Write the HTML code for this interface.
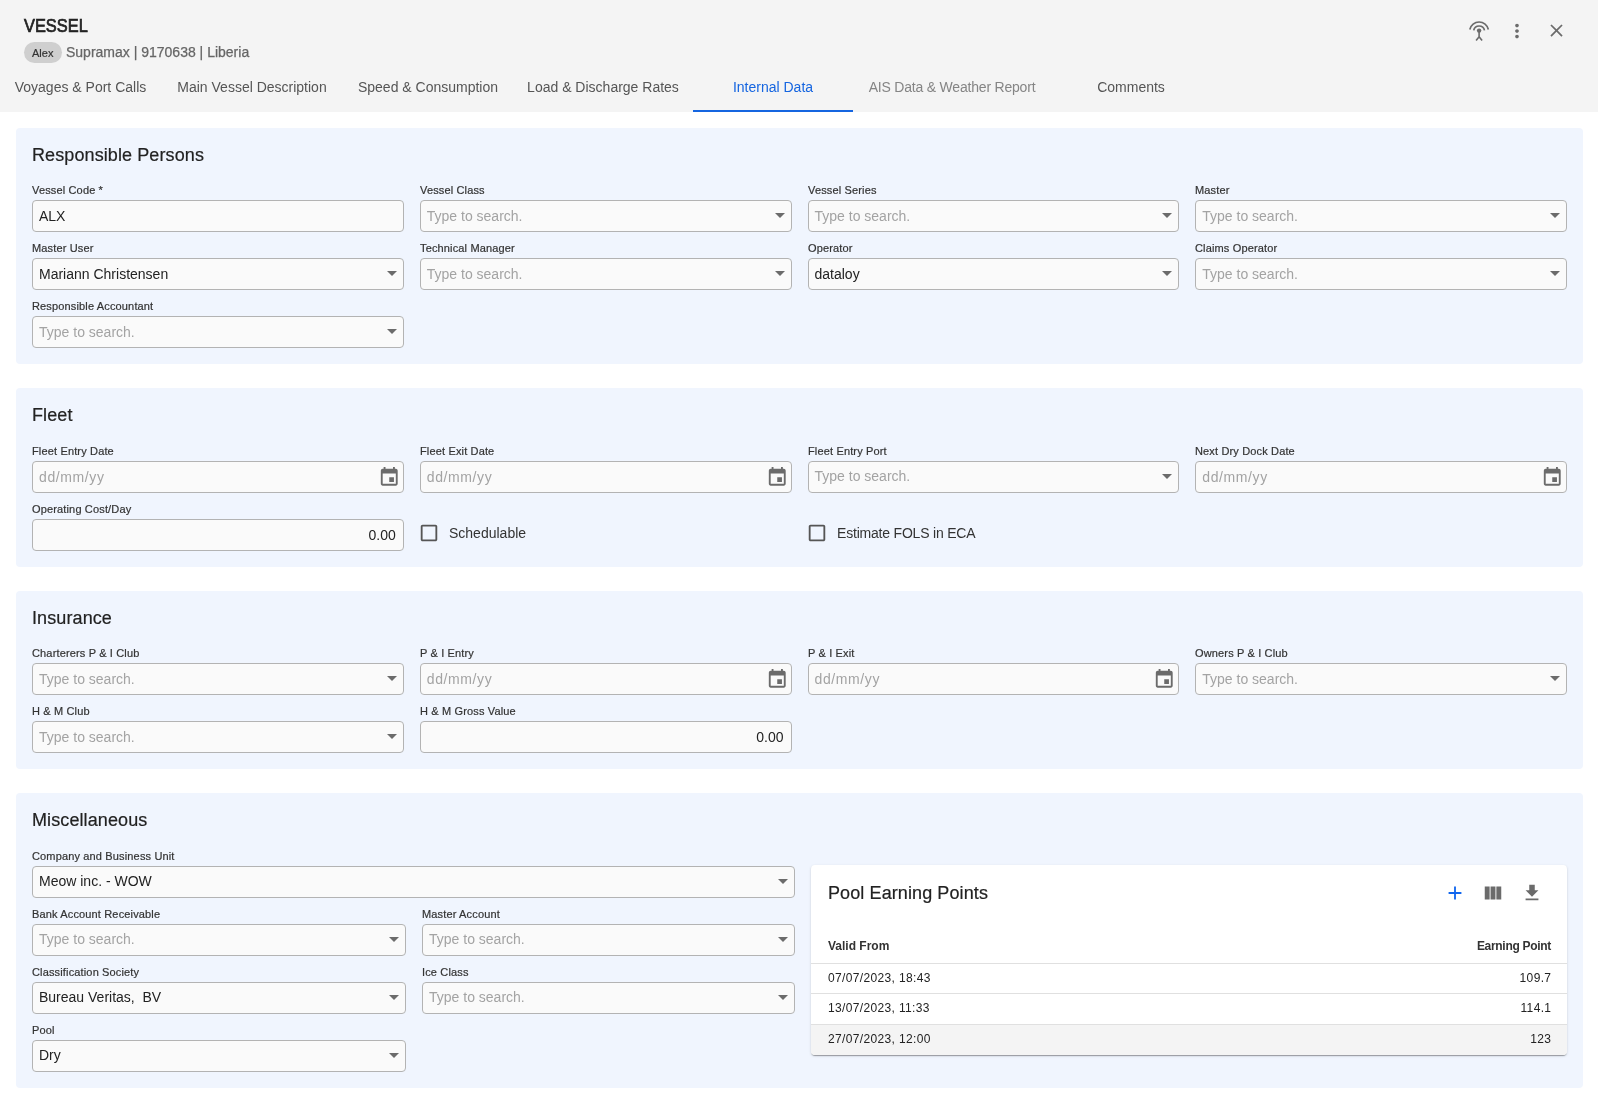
<!DOCTYPE html>
<html><head><meta charset="utf-8">
<style>
*{box-sizing:border-box;margin:0;padding:0}
html,body{width:1598px;height:1115px;overflow:hidden;background:#fff}
body{position:relative;font-family:"Liberation Sans",sans-serif;color:#222}
.a{position:absolute;white-space:nowrap;line-height:1}
#hdr{position:absolute;left:0;top:0;width:1598px;height:112px;background:#f4f4f4}
.tab{position:absolute;top:80px;font-size:14px;color:#555;text-align:center}
.sec{position:absolute;left:16px;width:1567px;background:#f0f5fe;border-radius:4px}
.st{position:absolute;left:16px;font-size:18px;color:#222;-webkit-text-stroke:0.2px #222;letter-spacing:0.1px}
.lbl{position:absolute;font-size:11px;color:#333;-webkit-text-stroke:0.2px #333;letter-spacing:0.15px}
.box{position:absolute;height:32px;border:1px solid #b3b3b3;border-radius:4px;background:#fafafa}
.box .v{position:absolute;left:6px;top:8px;font-size:14px;line-height:1;color:#222;white-space:nowrap}
.box .p{position:absolute;left:6px;top:8px;font-size:14px;line-height:1;color:#a3a3a3;white-space:nowrap}
.box .r{position:absolute;right:7px;top:8px;font-size:14px;line-height:1;color:#222}
.dd{position:absolute;right:6px;top:12px;width:0;height:0;border-left:5px solid transparent;border-right:5px solid transparent;border-top:5px solid #6b6b6b}
.cal{position:absolute;right:2.5px;top:4px;width:22.5px;height:22.5px}
</style></head><body><div id="root" style="will-change:transform;position:absolute;left:0;top:0;width:1598px;height:1115px">
<div id="hdr">
  <div class="a" style="left:24px;top:17px;font-size:18px;color:#222;-webkit-text-stroke:0.7px #222;transform:scaleX(0.91);transform-origin:0 0">VESSEL</div>
  <div class="a" style="left:24px;top:42px;width:38px;height:21px;border-radius:11px;background:#cfcfcf"></div>
  <div class="a" style="left:32px;top:48px;font-size:11px;color:#333;-webkit-text-stroke:0.2px #333">Alex</div>
  <div class="a" style="left:66px;top:45px;font-size:14px;color:#666;-webkit-text-stroke:0.25px #666">Supramax | 9170638 | Liberia</div>
  <div class="tab a" style="left:0;width:161px;top:80px">Voyages &amp; Port Calls</div>
  <div class="tab a" style="left:161px;width:182px;top:80px">Main Vessel Description</div>
  <div class="tab a" style="left:343px;width:170px;top:80px">Speed &amp; Consumption</div>
  <div class="tab a" style="left:513px;width:180px;top:80px">Load &amp; Discharge Rates</div>
  <div class="tab a" style="left:693px;width:160px;top:80px;color:#1565e0">Internal Data</div>
  <div class="tab a" style="left:853px;width:198px;top:80px;color:#858585;letter-spacing:-0.2px">AIS Data &amp; Weather Report</div>
  <div class="tab a" style="left:1051px;width:160px;top:80px">Comments</div>
  <div class="a" style="left:693px;top:110px;width:160px;height:2px;background:#1565e0"></div>
</div>
<!-- SECTIONS -->
<div class="sec" style="top:128px;height:236px"></div>
<div class="a st" style="left:32px;top:145.76px">Responsible Persons</div>
<div class="a lbl" style="left:32px;top:184.69px">Vessel Code *</div>
<div class="box" style="left:32px;top:200px;width:371.75px"><span class="v" style="top:8px">ALX</span></div>
<div class="a lbl" style="left:420px;top:184.69px">Vessel Class</div>
<div class="box" style="left:419.75px;top:200px;width:371.75px"><span class="p" style="top:8px">Type to search.</span><span class="dd"></span></div>
<div class="a lbl" style="left:808px;top:184.69px">Vessel Series</div>
<div class="box" style="left:807.5px;top:200px;width:371.75px"><span class="p" style="top:8px">Type to search.</span><span class="dd"></span></div>
<div class="a lbl" style="left:1195px;top:184.69px">Master</div>
<div class="box" style="left:1195.25px;top:200px;width:371.75px"><span class="p" style="top:8px">Type to search.</span><span class="dd"></span></div>
<div class="a lbl" style="left:32px;top:242.69px">Master User</div>
<div class="box" style="left:32px;top:258px;width:371.75px"><span class="v" style="top:8px">Mariann Christensen</span><span class="dd"></span></div>
<div class="a lbl" style="left:420px;top:242.69px">Technical Manager</div>
<div class="box" style="left:419.75px;top:258px;width:371.75px"><span class="p" style="top:8px">Type to search.</span><span class="dd"></span></div>
<div class="a lbl" style="left:808px;top:242.69px">Operator</div>
<div class="box" style="left:807.5px;top:258px;width:371.75px"><span class="v" style="top:8px">dataloy</span><span class="dd"></span></div>
<div class="a lbl" style="left:1195px;top:242.69px">Claims Operator</div>
<div class="box" style="left:1195.25px;top:258px;width:371.75px"><span class="p" style="top:8px">Type to search.</span><span class="dd"></span></div>
<div class="a lbl" style="left:32px;top:300.69px">Responsible Accountant</div>
<div class="box" style="left:32px;top:316px;width:371.75px"><span class="p" style="top:8px">Type to search.</span><span class="dd"></span></div>
<div class="sec" style="top:388px;height:179px"></div>
<div class="a st" style="left:32px;top:405.76px">Fleet</div>
<div class="a lbl" style="left:32px;top:445.69px">Fleet Entry Date</div>
<div class="box" style="left:32px;top:461px;width:371.75px"><span class="p" style="top:8px;letter-spacing:0.6px">dd/mm/yy</span><svg class="cal" viewBox="0 0 24 24"><path fill="#6b6b6b" d="M17 12h-5v5h5v-5zM16 1v2H8V1H6v2H5c-1.11 0-1.99.9-1.99 2L3 19c0 1.1.89 2 2 2h14c1.1 0 2-.9 2-2V5c0-1.1-.9-2-2-2h-1V1h-2zm3 18H5V8h14v11z"/></svg></div>
<div class="a lbl" style="left:420px;top:445.69px">Fleet Exit Date</div>
<div class="box" style="left:419.75px;top:461px;width:371.75px"><span class="p" style="top:8px;letter-spacing:0.6px">dd/mm/yy</span><svg class="cal" viewBox="0 0 24 24"><path fill="#6b6b6b" d="M17 12h-5v5h5v-5zM16 1v2H8V1H6v2H5c-1.11 0-1.99.9-1.99 2L3 19c0 1.1.89 2 2 2h14c1.1 0 2-.9 2-2V5c0-1.1-.9-2-2-2h-1V1h-2zm3 18H5V8h14v11z"/></svg></div>
<div class="a lbl" style="left:808px;top:445.69px">Fleet Entry Port</div>
<div class="box" style="left:807.5px;top:461px;width:371.75px"><span class="p" style="top:7px">Type to search.</span><span class="dd"></span></div>
<div class="a lbl" style="left:1195px;top:445.69px">Next Dry Dock Date</div>
<div class="box" style="left:1195.25px;top:461px;width:371.75px"><span class="p" style="top:8px;letter-spacing:0.6px">dd/mm/yy</span><svg class="cal" viewBox="0 0 24 24"><path fill="#6b6b6b" d="M17 12h-5v5h5v-5zM16 1v2H8V1H6v2H5c-1.11 0-1.99.9-1.99 2L3 19c0 1.1.89 2 2 2h14c1.1 0 2-.9 2-2V5c0-1.1-.9-2-2-2h-1V1h-2zm3 18H5V8h14v11z"/></svg></div>
<div class="a lbl" style="left:32px;top:503.69px">Operating Cost/Day</div>
<div class="box" style="left:32px;top:519px;width:371.75px"><span class="r">0.00</span></div>
<svg class="a" style="left:418px;top:522px;width:22px;height:22px" viewBox="0 0 24 24"><path fill="#555" d="M19 5v14H5V5h14m0-2H5c-1.1 0-2 .9-2 2v14c0 1.1.9 2 2 2h14c1.1 0 2-.9 2-2V5c0-1.1-.9-2-2-2z"/></svg>
<div class="a" style="left:449px;top:526.15px;font-size:14px;color:#333">Schedulable</div>
<svg class="a" style="left:806px;top:522px;width:22px;height:22px" viewBox="0 0 24 24"><path fill="#555" d="M19 5v14H5V5h14m0-2H5c-1.1 0-2 .9-2 2v14c0 1.1.9 2 2 2h14c1.1 0 2-.9 2-2V5c0-1.1-.9-2-2-2z"/></svg>
<div class="a" style="left:837px;top:526.15px;font-size:14px;color:#333;letter-spacing:-0.2px">Estimate FOLS in ECA</div>
<div class="sec" style="top:591px;height:178px"></div>
<div class="a st" style="left:32px;top:608.76px">Insurance</div>
<div class="a lbl" style="left:32px;top:647.69px">Charterers P &amp; I Club</div>
<div class="box" style="left:32px;top:663px;width:371.75px"><span class="p" style="top:8px">Type to search.</span><span class="dd"></span></div>
<div class="a lbl" style="left:420px;top:647.69px">P &amp; I Entry</div>
<div class="box" style="left:419.75px;top:663px;width:371.75px"><span class="p" style="top:8px;letter-spacing:0.6px">dd/mm/yy</span><svg class="cal" viewBox="0 0 24 24"><path fill="#6b6b6b" d="M17 12h-5v5h5v-5zM16 1v2H8V1H6v2H5c-1.11 0-1.99.9-1.99 2L3 19c0 1.1.89 2 2 2h14c1.1 0 2-.9 2-2V5c0-1.1-.9-2-2-2h-1V1h-2zm3 18H5V8h14v11z"/></svg></div>
<div class="a lbl" style="left:808px;top:647.69px">P &amp; I Exit</div>
<div class="box" style="left:807.5px;top:663px;width:371.75px"><span class="p" style="top:8px;letter-spacing:0.6px">dd/mm/yy</span><svg class="cal" viewBox="0 0 24 24"><path fill="#6b6b6b" d="M17 12h-5v5h5v-5zM16 1v2H8V1H6v2H5c-1.11 0-1.99.9-1.99 2L3 19c0 1.1.89 2 2 2h14c1.1 0 2-.9 2-2V5c0-1.1-.9-2-2-2h-1V1h-2zm3 18H5V8h14v11z"/></svg></div>
<div class="a lbl" style="left:1195px;top:647.69px">Owners P &amp; I Club</div>
<div class="box" style="left:1195.25px;top:663px;width:371.75px"><span class="p" style="top:8px">Type to search.</span><span class="dd"></span></div>
<div class="a lbl" style="left:32px;top:705.69px">H &amp; M Club</div>
<div class="box" style="left:32px;top:721px;width:371.75px"><span class="p" style="top:8px">Type to search.</span><span class="dd"></span></div>
<div class="a lbl" style="left:420px;top:705.69px">H &amp; M Gross Value</div>
<div class="box" style="left:419.75px;top:721px;width:371.75px"><span class="r">0.00</span></div>
<div class="sec" style="top:793px;height:295px"></div>
<div class="a st" style="left:32px;top:810.76px">Miscellaneous</div>
<div class="a lbl" style="left:32px;top:850.69px">Company and Business Unit</div>
<div class="box" style="left:32px;top:866px;width:763px"><span class="v" style="top:7px">Meow inc. - WOW</span><span class="dd"></span></div>
<div class="a lbl" style="left:32px;top:908.69px">Bank Account Receivable</div>
<div class="box" style="left:32px;top:924px;width:374px"><span class="p" style="top:7px">Type to search.</span><span class="dd"></span></div>
<div class="a lbl" style="left:422px;top:908.69px">Master Account</div>
<div class="box" style="left:422px;top:924px;width:373px"><span class="p" style="top:7px">Type to search.</span><span class="dd"></span></div>
<div class="a lbl" style="left:32px;top:966.69px">Classification Society</div>
<div class="box" style="left:32px;top:982px;width:374px"><span class="v" style="top:7px">Bureau Veritas,&nbsp; BV</span><span class="dd"></span></div>
<div class="a lbl" style="left:422px;top:966.69px">Ice Class</div>
<div class="box" style="left:422px;top:982px;width:373px"><span class="p" style="top:7px">Type to search.</span><span class="dd"></span></div>
<div class="a lbl" style="left:32px;top:1024.69px">Pool</div>
<div class="box" style="left:32px;top:1040px;width:374px"><span class="v" style="top:7px">Dry</span><span class="dd"></span></div>
<div class="a" style="left:811px;top:865px;width:756px;height:190px;background:#fff;border-radius:4px;box-shadow:0 2px 1px -1px rgba(0,0,0,.2),0 1px 1px 0 rgba(0,0,0,.14),0 1px 3px 0 rgba(0,0,0,.12);overflow:hidden">
</div>
<div class="a" style="left:828px;top:883.76px;font-size:18px;color:#222;-webkit-text-stroke:0.2px #222;letter-spacing:0.1px">Pool Earning Points</div>
<svg class="a" style="left:1444px;top:882px;width:22px;height:22px" viewBox="0 0 24 24"><path fill="#1166ee" d="M19 13h-6v6h-2v-6H5v-2h6V5h2v6h6v2z"/></svg>
<svg class="a" style="left:1482px;top:882px;width:22px;height:22px" viewBox="0 0 24 24"><path fill="#6b6b6b" d="M14.67 5v14H9.33V5h5.34zm1 14H21V5h-5.33v14zm-7.34 0V5H3v14h5.33z"/></svg>
<svg class="a" style="left:1521px;top:882px;width:22px;height:22px" viewBox="0 0 24 24"><path fill="#6b6b6b" d="M19 9h-4V3H9v6H5l7 7 7-7zM5 18v2h14v-2H5z"/></svg>
<div class="a" style="left:828px;top:939.84px;font-size:12px;font-weight:700;color:#333">Valid From</div>
<div class="a" style="right:47px;top:939.84px;font-size:12px;font-weight:700;color:#333;letter-spacing:-0.3px">Earning Point</div>
<div class="a" style="left:811px;top:963px;width:756px;height:1px;background:#e0e0e0"></div>
<div class="a" style="left:828px;top:971.84px;font-size:12px;color:#222;letter-spacing:0.35px">07/07/2023, 18:43</div>
<div class="a" style="right:46.65px;top:971.84px;font-size:12px;color:#222;letter-spacing:0.35px">109.7</div>
<div class="a" style="left:828px;top:1001.84px;font-size:12px;color:#222;letter-spacing:0.35px">13/07/2023, 11:33</div>
<div class="a" style="right:46.65px;top:1001.84px;font-size:12px;color:#222;letter-spacing:0.35px">114.1</div>
<div class="a" style="left:811px;top:1025px;width:756px;height:30px;background:#f4f4f4;border-radius:0 0 4px 4px"></div>
<div class="a" style="left:828px;top:1032.84px;font-size:12px;color:#222;letter-spacing:0.35px">27/07/2023, 12:00</div>
<div class="a" style="right:46.65px;top:1032.84px;font-size:12px;color:#222;letter-spacing:0.35px">123</div>
<div class="a" style="left:811px;top:993px;width:756px;height:1px;background:#e0e0e0"></div>
<div class="a" style="left:811px;top:1024px;width:756px;height:1px;background:#e0e0e0"></div>
<svg class="a" style="left:1467px;top:19px;width:24px;height:24px" viewBox="0 0 24 24" fill="none" stroke="#6b6b6b" stroke-width="1.7">
<path d="M2.81 10.52 A9.5 9.5 0 0 1 21.39 10.52"/><path d="M6.72 11.36 A5.5 5.5 0 0 1 17.48 11.36"/>
<circle cx="12.1" cy="11.6" r="2.2" fill="#6b6b6b" stroke="none"/><path d="M12.1 12v5.8M9.1 21.5l3-3.8 3 3.8" stroke-width="1.6"/></svg>
<svg class="a" style="left:1506px;top:20px;width:22px;height:22px" viewBox="0 0 24 24"><path fill="#6b6b6b" d="M12 8c1.1 0 2-.9 2-2s-.9-2-2-2-2 .9-2 2 .9 2 2 2zm0 2c-1.1 0-2 .9-2 2s.9 2 2 2 2-.9 2-2-.9-2-2-2zm0 6c-1.1 0-2 .9-2 2s.9 2 2 2 2-.9 2-2-.9-2-2-2z"/></svg>
<svg class="a" style="left:1545.6px;top:20.2px;width:21px;height:21px" viewBox="0 0 24 24"><path fill="#6b6b6b" d="M19 6.41L17.59 5 12 10.59 6.41 5 5 6.41 10.59 12 5 17.59 6.41 19 12 13.41 17.59 19 19 17.59 13.41 12z"/></svg>
</div></body></html>
